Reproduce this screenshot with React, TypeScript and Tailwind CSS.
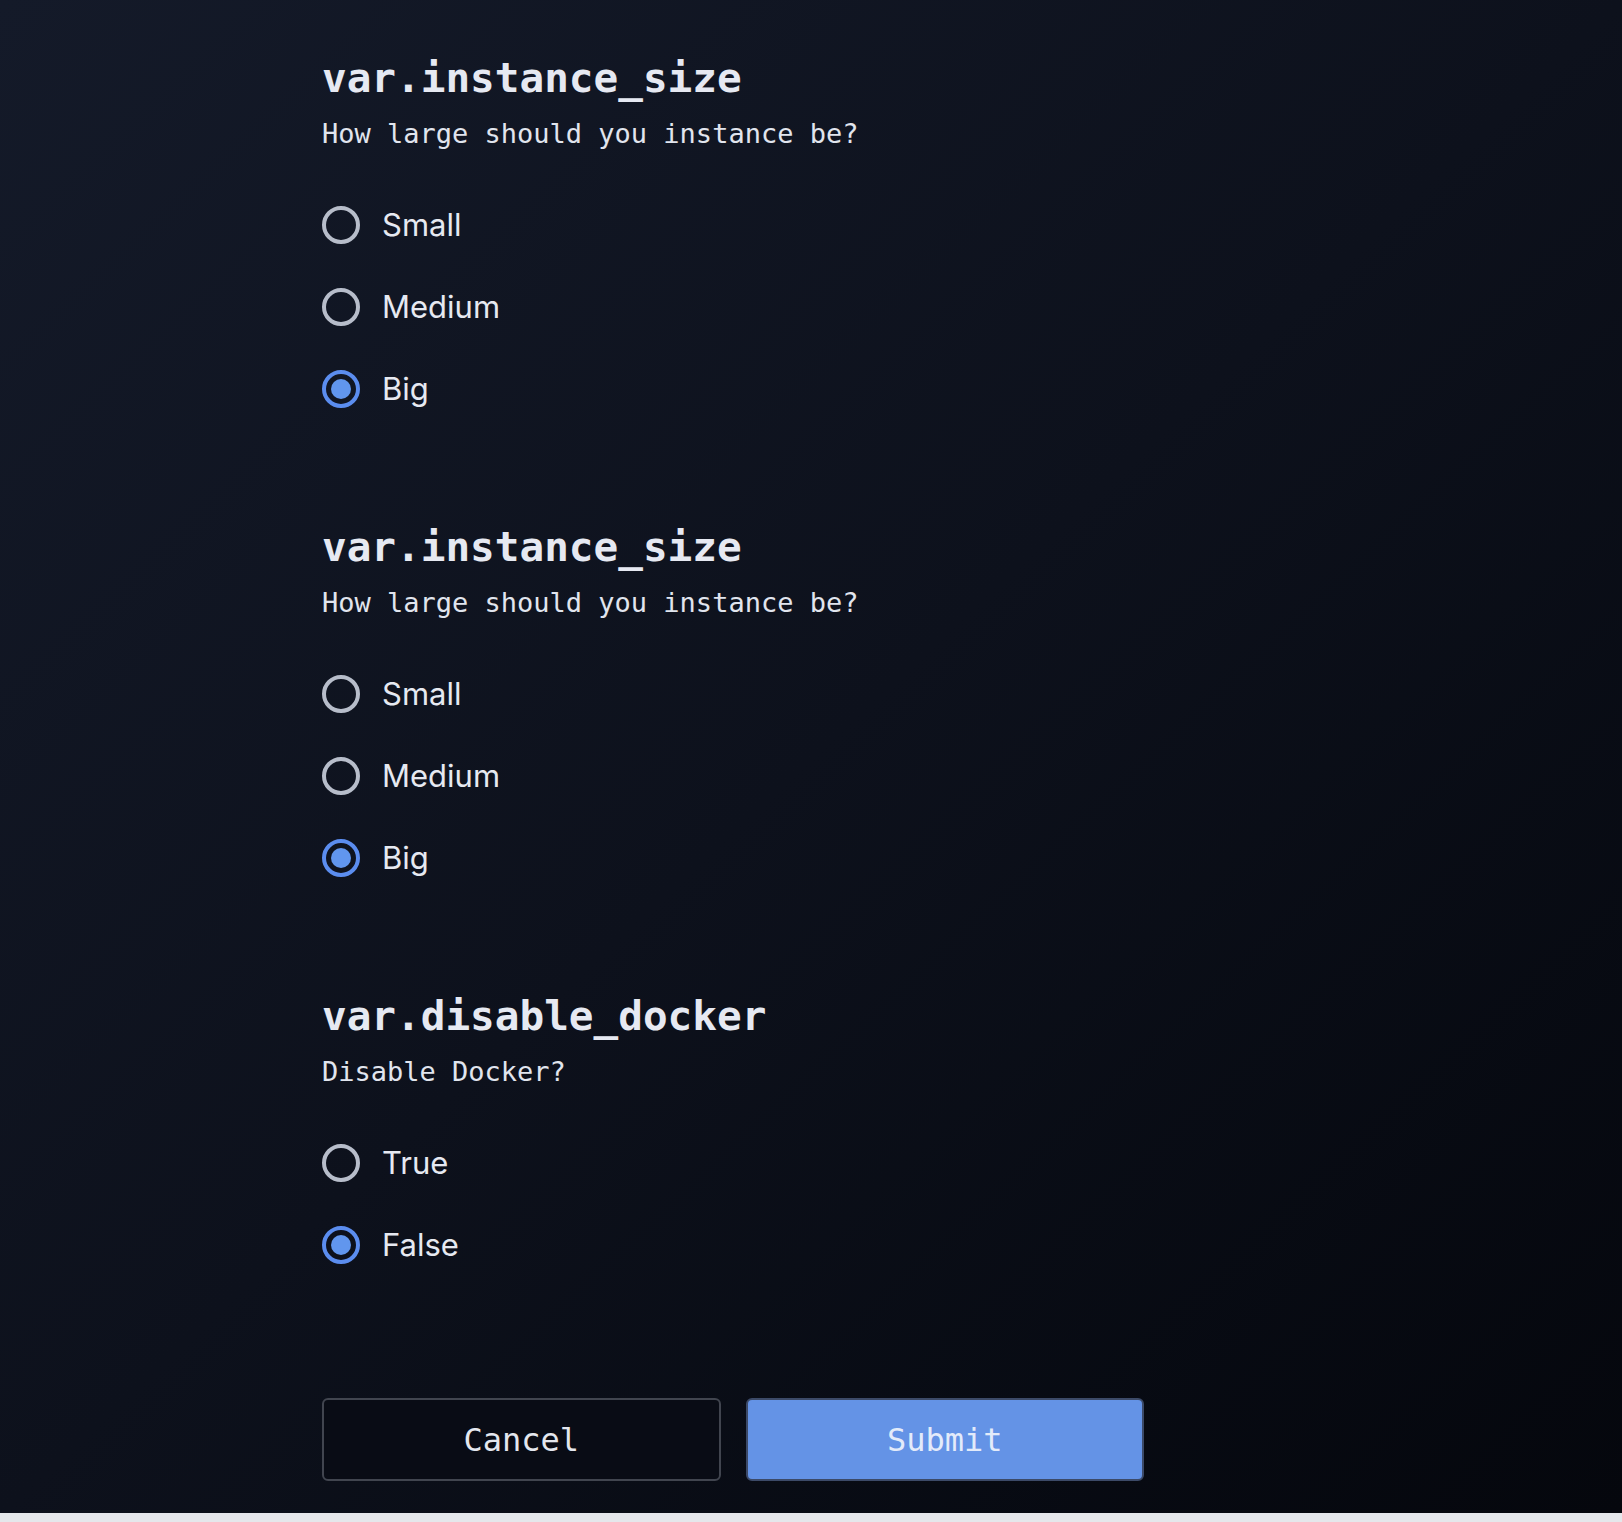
import React, { useState } from 'react';

type Field = {
  name: string;
  prompt: string;
  options: string[];
  initial: string;
};

const fields: Field[] = [
  { name: 'var.instance_size', prompt: 'How large should you instance be?', options: ['Small', 'Medium', 'Big'], initial: 'Big' },
  { name: 'var.instance_size', prompt: 'How large should you instance be?', options: ['Small', 'Medium', 'Big'], initial: 'Big' },
  { name: 'var.disable_docker', prompt: 'Disable Docker?', options: ['True', 'False'], initial: 'False' },
];

const mono = "font-['DejaVu_Sans_Mono','Liberation_Mono',monospace]";

const Radio = ({ label, checked, onSelect }: { label: string; checked: boolean; onSelect: () => void }) => (
  <button type="button" onClick={onSelect} className="flex items-center h-10 gap-[22px] text-left">
    <span
      className={`w-[38px] h-[38px] rounded-full border-[4px] flex items-center justify-center shrink-0 ${
        checked ? 'border-[#5b8def]' : 'border-[#b7bdca]'
      }`}
    >
      {checked && <span className="w-[20px] h-[20px] rounded-full bg-[#6196ee]"></span>}
    </span>
    <span className="font-['Inter','Noto_Sans',sans-serif] text-[31px] leading-10 text-[#e6e9f1]">{label}</span>
  </button>
);

const VariableField = ({ field }: { field: Field }) => {
  const [value, setValue] = useState(field.initial);
  return (
    <div className="flex flex-col">
      <h2 className={`${mono} font-bold text-[41px] leading-[48px] text-[#e6e9f2]`}>{field.name}</h2>
      <p className={`${mono} text-[27px] leading-9 mt-[14px] text-[#e1e5ee]`}>{field.prompt}</p>
      <div className="flex flex-col gap-[42px] mt-[53px]">
        {field.options.map((opt) => (
          <Radio key={opt} label={opt} checked={value === opt} onSelect={() => setValue(opt)} />
        ))}
      </div>
    </div>
  );
};

export default function App() {
  return (
    <div className="w-full min-h-[1522px] bg-[#e5e7eb] flex flex-col">
      <div className="h-[1513px] bg-gradient-to-br from-[#141a29] via-[#0d111c] to-[#05070d] pl-[322px] pt-[54px]">
        <div className="flex flex-col gap-[114px] w-[822px]">
          {fields.map((f, i) => (
            <VariableField key={i} field={f} />
          ))}
        </div>

        {/* Actions */}
        <div className="flex gap-[25px] mt-[133px] w-[822px]">
          <button
            type="button"
            className={`${mono} flex-1 h-[83px] rounded-md border-2 border-[#41454f] bg-[#090c15] text-[32px] text-[#e4e7ee]`}
          >
            Cancel
          </button>
          <button
            type="button"
            className={`${mono} flex-1 h-[83px] rounded-md border-2 border-[#3c4a68] bg-[#6493e6] text-[32px] text-[#e3ebfa]`}
          >
            Submit
          </button>
        </div>
      </div>
    </div>
  );
}
